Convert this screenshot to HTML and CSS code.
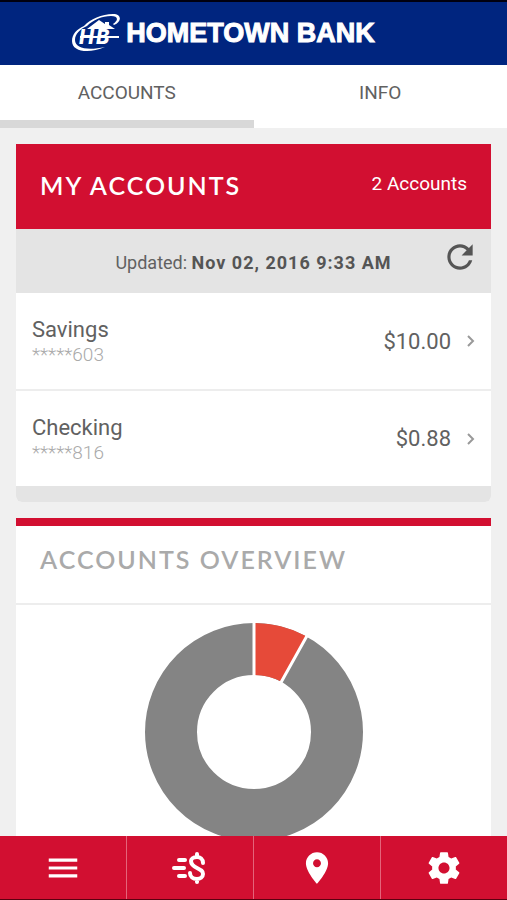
FILE: index.html
```
<!DOCTYPE html>
<html lang="en">

<head>
    <meta charset="UTF-8">
    <meta name="viewport" content="width=device-width, initial-scale=1.0">
    <title>Hometown Bank</title>
    <link rel="stylesheet" href="styles.css">
</head>

<body>
    <header class="brand">
        <svg class="brand-mark" viewBox="0 0 48 40" aria-hidden="true">
            <path class="swoosh" d="M12 12 C18 5 30 0 41 0 C50 0 50 8 42 11 L41 10 C47 6 46 2 39 2 C30 2 21 6 15 12 C8 15 3 20 3 26 C3 34 15 37 33 33 C17 40 0 38 0 27 C0 20 5 15 12 12 Z" />
            <path class="roof" d="M15 15 L27 6 L33 10 V8 H37 V11 L43 15 Z" />
            <text class="monogram" x="7" y="30">HB</text>
            <path class="bar" d="M8 23 H47" />
        </svg>
        <span class="brand-name">HOMETOWN BANK</span>
    </header>

    <nav class="tabs">
        <a href="#accounts" class="tab active">ACCOUNTS</a>
        <a href="#info" class="tab">INFO</a>
    </nav>

    <main>
        <section class="card" id="accounts">
            <div class="card-header">
                <h2>MY ACCOUNTS</h2>
                <span class="count">2 Accounts</span>
            </div>
            <div class="updated">
                <p>Updated: <strong>Nov 02, 2016 9:33 AM</strong></p>
                <button type="button" class="refresh" aria-label="Refresh">
                    <svg class="icon" viewBox="0 0 24 24">
                        <path d="M17.65 6.35C16.2 4.9 14.21 4 12 4c-4.42 0-7.99 3.58-7.99 8s3.57 8 7.99 8c3.73 0 6.84-2.55 7.73-6h-2.08c-.82 2.33-3.04 4-5.65 4-3.31 0-6-2.69-6-6s2.69-6 6-6c1.66 0 3.14.69 4.22 1.78L13 11h7V4l-2.35 2.35z" />
                    </svg>
                </button>
            </div>
            <a href="#savings" class="account">
                <span class="account-info">
                    <span class="account-name">Savings</span>
                    <span class="account-number">*****603</span>
                </span>
                <span class="balance">$10.00</span>
                <svg class="chevron" viewBox="0 0 8 14" aria-hidden="true"><path d="M1 2 L6 7 L1 12" /></svg>
            </a>
            <a href="#checking" class="account">
                <span class="account-info">
                    <span class="account-name">Checking</span>
                    <span class="account-number">*****816</span>
                </span>
                <span class="balance">$0.88</span>
                <svg class="chevron" viewBox="0 0 8 14" aria-hidden="true"><path d="M1 2 L6 7 L1 12" /></svg>
            </a>
            <div class="card-footer"></div>
        </section>

        <section class="card overview">
            <h2>ACCOUNTS OVERVIEW</h2>
            <div class="chart">
                <svg viewBox="0 0 218 218" role="img" aria-label="Share of each account">
                    <circle class="slice-savings" cx="109" cy="109" r="83" />
                    <path class="slice-checking" d="M109 26 A83 83 0 0 1 149 36" />
                    <path class="slice-gap" d="M109 0 V60 M163 11 L134 63" />
                </svg>
            </div>
        </section>
    </main>

    <nav class="bottom-nav">
        <a href="#menu" aria-label="Menu">
            <svg class="icon" viewBox="0 0 24 24">
                <path d="M3 18h18v-2H3v2zm0-5h18v-2H3v2zm0-7v2h18V6H3z" />
            </svg>
        </a>
        <a href="#transfer" aria-label="Transfer money">
            <svg class="icon-transfer" viewBox="0 0 38 38">
                <path d="M8 11 H14 M3 19 H13 M8 27 H14" />
                <path d="M32 14 C32 10 29 8 26 8 C22 8 20 10 20 12 C20 15 22 17 26 19 C30 21 32 22 32 25 C32 28 29 30 26 30 C22 30 19 28 19 24 M26 5 V8 M26 30 V33" />
            </svg>
        </a>
        <a href="#locations" aria-label="Locations">
            <svg class="icon" viewBox="0 0 24 24">
                <path d="M12 2C8.13 2 5 5.13 5 9c0 5.25 7 13 7 13s7-7.75 7-13c0-3.87-3.13-7-7-7zm0 9.5c-1.38 0-2.5-1.12-2.5-2.5s1.12-2.5 2.5-2.5 2.5 1.12 2.5 2.5-1.12 2.5-2.5 2.5z" />
            </svg>
        </a>
        <a href="#settings" aria-label="Settings">
            <svg class="icon" viewBox="0 0 24 24">
                <path d="M19.43 12.98c.04-.32.07-.64.07-.98s-.03-.66-.07-.98l2.11-1.65c.19-.15.24-.42.12-.64l-2-3.46c-.12-.22-.39-.3-.61-.22l-2.49 1c-.52-.4-1.08-.73-1.69-.98l-.38-2.65C14.46 2.18 14.25 2 14 2h-4c-.25 0-.46.18-.49.42l-.38 2.65c-.61.25-1.17.59-1.69.98l-2.49-1c-.23-.09-.49 0-.61.22l-2 3.46c-.13.22-.07.49.12.64l2.11 1.65c-.04.32-.07.65-.07.98s.03.66.07.98l-2.11 1.65c-.19.15-.24.42-.12.64l2 3.46c.12.22.39.3.61.22l2.49-1c.52.4 1.08.73 1.69.98l.38 2.65c.03.24.24.42.49.42h4c.25 0 .46-.18.49-.42l.38-2.65c.61-.25 1.17-.59 1.69-.98l2.49 1c.23.09.49 0 .61-.22l2-3.46c.12-.22.07-.49-.12-.64l-2.11-1.65zM12 15.5c-1.93 0-3.5-1.57-3.5-3.5s1.57-3.5 3.5-3.5 3.5 1.57 3.5 3.5-1.57 3.5-3.5 3.5z" />
            </svg>
        </a>
    </nav>
</body>

</html>
```

FILE: styles.css
```
* {
    box-sizing: border-box;
}

body {
    margin: 0;
    height: 100vh;
    display: flex;
    flex-direction: column;
    background-color: #f0f0f0;
    color: #616161;
    font-family: Roboto, "Liberation Sans", sans-serif;
}

a {
    color: inherit;
    text-decoration: none;
}

h2,
p {
    margin: 0;
}

h2 {
    font-family: Lato, "Liberation Sans", sans-serif;
    font-size: 25px;
    line-height: 32px;
    font-weight: 600;
    letter-spacing: 2px;
}

/* Header */
.brand {
    display: flex;
    flex-shrink: 0;
    align-items: center;
    justify-content: center;
    gap: 6px;
    height: 65px;
    padding-right: 60px;
    border-top: 2px solid #000010;
    background-color: #00257f;
    color: white;
}

.brand-mark {
    width: 48px;
    height: 40px;
    fill: white;
}

.monogram {
    font: italic 800 20px Inter, "Liberation Sans", sans-serif;
    letter-spacing: 2px;
}

.bar {
    stroke: white;
    stroke-width: 2;
}

.brand-name {
    font-family: "Liberation Sans", sans-serif;
    font-size: 27px;
    font-weight: bold;
    white-space: nowrap;
    -webkit-text-stroke: 1px white;
}

/* Tabs */
.tabs {
    display: flex;
    flex-shrink: 0;
    background-color: white;
}

.tab {
    flex: 1;
    height: 63px;
    padding-top: 16px;
    border-bottom: 8px solid transparent;
    text-align: center;
    font-size: 19px;
    line-height: 24px;
}

.tab.active {
    border-bottom-color: #d8d8d8;
}

/* Cards */
main {
    flex: 1;
    min-height: 0;
    padding: 16px;
    overflow-y: auto;
    scrollbar-width: none;
}

.card {
    margin-bottom: 16px;
    background-color: white;
    border-radius: 0 0 6px 6px;
    overflow: hidden;
}

.card-header {
    display: flex;
    align-items: center;
    justify-content: space-between;
    height: 85px;
    padding: 0 24px 4px;
    background-color: #d20f31;
    color: white;
}

.count {
    padding-bottom: 2px;
    font-size: 19px;
}

.updated {
    display: flex;
    align-items: center;
    height: 64px;
    padding: 0 12px;
    background-color: #e4e4e4;
}

.updated p {
    flex: 1;
    padding: 4px 0 0 38px;
    text-align: center;
    font-size: 18px;
    line-height: 24px;
}

.updated strong {
    letter-spacing: 1px;
    color: #555;
}

.refresh {
    display: flex;
    padding: 0 0 8px;
    border: none;
    background: none;
    color: #555;
    cursor: pointer;
}

.icon {
    width: 38px;
    height: 38px;
    fill: currentColor;
}

.account {
    display: flex;
    align-items: center;
    height: 96px;
    padding: 0 16px;
}

.account + .account {
    height: 97px;
    border-top: 2px solid #ededed;
}

.account-info {
    flex: 1;
    display: flex;
    flex-direction: column;
    padding-top: 2px;
}

.account-name {
    font-size: 22px;
    line-height: 26px;
}

.account-number {
    color: #aaa;
    font-size: 19px;
    font-weight: 300;
    line-height: 24px;
}

.balance {
    font-size: 22px;
}

.chevron {
    width: 8px;
    height: 14px;
    margin-left: 16px;
    fill: none;
    stroke: #999;
    stroke-width: 2;
}

.card-footer {
    height: 16px;
    background-color: #e4e4e4;
}

/* Overview */
.overview {
    border-top: 8px solid #d20f31;
}

.overview h2 {
    padding: 17px 24px 28px;
    border-bottom: 2px solid #ededed;
    color: #aaa;
}

.chart {
    padding: 18px;
    text-align: center;
}

.chart svg {
    width: 218px;
    height: 218px;
}

.slice-savings,
.slice-checking {
    fill: none;
    stroke: #848484;
    stroke-width: 52;
}

.slice-checking {
    stroke: #e64a39;
}

.slice-gap {
    stroke: white;
    stroke-width: 3;
}

/* Bottom navigation */
.bottom-nav {
    display: flex;
    flex-shrink: 0;
    height: 64px;
    border-bottom: 1px solid #5c0010;
    background-color: #d20f31;
    color: white;
}

.bottom-nav a {
    flex: 1;
    display: flex;
    align-items: center;
    justify-content: center;
}

.bottom-nav a + a {
    border-left: 1px solid #e4647a;
}

.icon-transfer {
    width: 38px;
    height: 38px;
    fill: none;
    stroke: white;
    stroke-width: 4;
    stroke-linecap: round;
}
```
